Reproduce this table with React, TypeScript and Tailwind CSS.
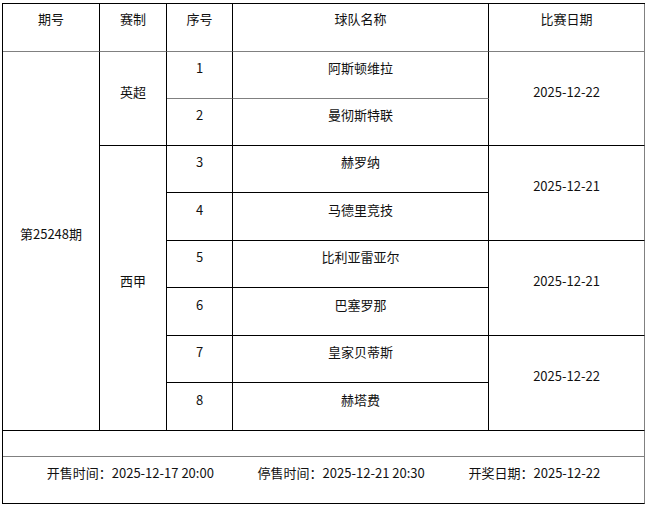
import React from "react";

const font = { fontFamily: '"Noto Sans CJK SC", "Liberation Sans", sans-serif' };

const cell =
  "flex items-center justify-center border-r border-b border-black pb-[14px] text-[13px] text-[#111]";

const rows = [
  { no: "1", team: "阿斯顿维拉" },
  { no: "2", team: "曼彻斯特联" },
  { no: "3", team: "赫罗纳" },
  { no: "4", team: "马德里竞技" },
  { no: "5", team: "比利亚雷亚尔" },
  { no: "6", team: "巴塞罗那" },
  { no: "7", team: "皇家贝蒂斯" },
  { no: "8", team: "赫塔费" },
];

const dates = ["2025-12-22", "2025-12-21", "2025-12-21", "2025-12-22"];
const rowStarts = ["row-start-2", "row-start-4", "row-start-6", "row-start-8"];
const numRows = [
  "row-start-2",
  "row-start-3",
  "row-start-4",
  "row-start-5",
  "row-start-6",
  "row-start-7",
  "row-start-8",
  "row-start-9",
];

export default function App() {
  return (
    <div className="w-[650px] h-[508px] bg-white pt-[3px] pl-[2px]" style={font}>
      <div className="grid w-[643px] grid-cols-[97px_67px_66px_256px_156px] grid-rows-[48px_47px_47px_47px_48px_47px_48px_47px_48px_26px_47px] border-l border-t border-black">
        {/* header */}
        <div className={`${cell} col-start-1 row-start-1 border-b-[#808080] pb-[17px]`}>期号</div>
        <div className={`${cell} col-start-2 row-start-1 border-b-[#808080] pb-[17px]`}>赛制</div>
        <div className={`${cell} col-start-3 row-start-1 border-b-[#808080] pb-[17px]`}>序号</div>
        <div className={`${cell} col-start-4 row-start-1 border-b-[#808080] pb-[17px]`}>球队名称</div>
        <div className={`${cell} col-start-5 row-start-1 border-b-[#808080] border-r-[#808080] pb-[17px]`}>比赛日期</div>

        <div className={`${cell} col-start-1 row-start-2 row-span-8`}>第25248期</div>
        <div className={`${cell} col-start-2 row-start-2 row-span-2`}>英超</div>
        <div className={`${cell} col-start-2 row-start-4 row-span-6`}>西甲</div>

        {rows.map((r, i) => (
          <React.Fragment key={r.no}>
            <div className={`${cell} col-start-3 ${numRows[i]} ${i === 0 ? "border-b-[#808080]" : ""}`}>
              {r.no}
            </div>
            <div className={`${cell} col-start-4 ${numRows[i]} ${i === 0 ? "border-b-[#808080]" : ""}`}>
              {r.team}
            </div>
          </React.Fragment>
        ))}

        {dates.map((d, i) => (
          <div key={i} className={`${cell} col-start-5 ${rowStarts[i]} row-span-2 border-r-[#808080]`}>
            {d}
          </div>
        ))}

        <div className="col-span-5 col-start-1 row-start-10 border-b border-r border-b-[#808080] border-r-[#808080]" />
        <div className={`${cell} col-span-5 col-start-1 row-start-11 justify-evenly border-r-[#808080]`}>
          <span>开售时间：2025-12-17 20:00</span>
          <span>停售时间：2025-12-21 20:30</span>
          <span>开奖日期：2025-12-22</span>
        </div>
      </div>
    </div>
  );
}
